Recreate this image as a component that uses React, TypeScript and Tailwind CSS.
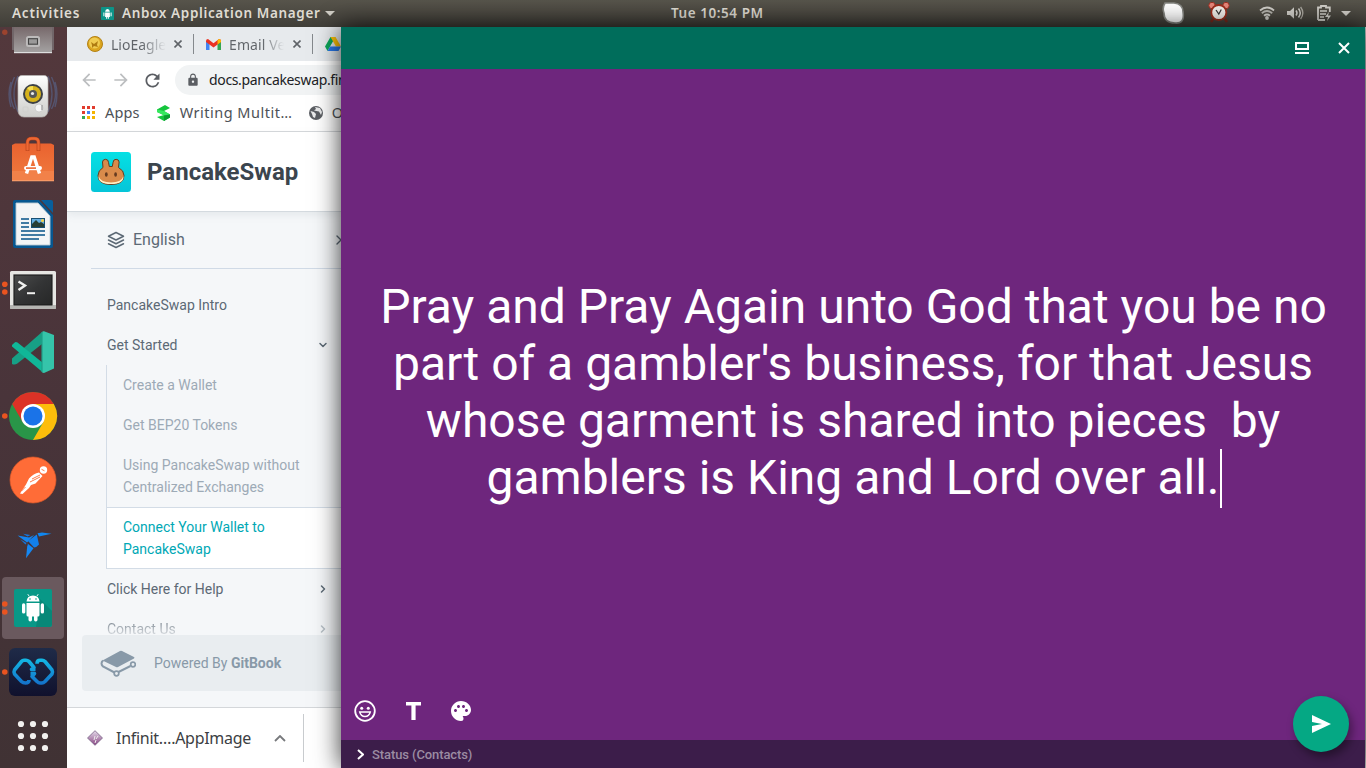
import React from 'react';
import { FiLayers, FiChevronRight, FiChevronDown } from 'react-icons/fi';
import { MdLock, MdRefresh, MdPalette, MdArrowBack, MdArrowForward } from 'react-icons/md';

const UI = "font-['Noto_Sans','Open_Sans',sans-serif]";

function Slot({ children, dots = [] }: { children: React.ReactNode; dots?: number[] }) {
  return (
    <svg className="block h-16 w-[67px] shrink-0" viewBox="0 0 67 64">
      {children}
      {dots.map((y) => (
        <circle key={y} cx="4.8" cy={y} r="2.8" fill="#e95420" />
      ))}
    </svg>
  );
}

function Dock() {
  return (
    <nav className="flex w-[67px] shrink-0 flex-col bg-linear-to-b from-[#53383c] via-[#49343a] to-[#403234]">
      <svg className="block h-[37px] w-[67px] shrink-0" viewBox="0 27 67 37">
        <defs>
          <linearGradient id="drawer" x1="0" y1="0" x2="0" y2="1">
            <stop offset="0" stopColor="#77696b" />
            <stop offset="1" stopColor="#a5a3a3" />
          </linearGradient>
        </defs>
        <rect x="12" y="27" width="42" height="23" fill="#716669" />
        <rect x="14" y="27" width="38" height="26" fill="url(#drawer)" />
        <rect x="14" y="52" width="38" height="1.2" fill="#dedede" />
        <rect x="26" y="36" width="14" height="11" rx="2.5" fill="#bdbbbb" />
        <rect x="28.5" y="38.7" width="9" height="5.5" fill="#9a9999" stroke="#444" strokeWidth="1.1" />
        <circle cx="4.8" cy="32.3" r="2.7" fill="#9c432e" />
      </svg>
      <Slot>
        <defs>
          <linearGradient id="spk" x1="0" y1="0" x2="0" y2="1">
            <stop offset="0" stopColor="#fff" />
            <stop offset="0.5" stopColor="#e4e4e2" />
            <stop offset="1" stopColor="#cfcfcc" />
          </linearGradient>
        </defs>
        <g fill="none" stroke="#5a6f9f" strokeWidth="1.4" opacity="0.5">
          <path d="M18 12q-8 18 0 36M14.500 13q-8 17 0 32M11 18q-4 12 0 25M48 12q8 18 0 36M51.500 13q8 17 0 32M55 18q4 12 0 25" />
        </g>
        <path d="M22 11.500h22q4 0 4 5v29q-.3 7.500-6 7.500H24q-6 0-6-7.500v-29q0-5 4-5z" fill="url(#spk)" stroke="#b9b7b4" strokeWidth=".7" />
        <circle cx="33" cy="30" r="10" fill="#3d4145" />
        <circle cx="33" cy="30" r="8" fill="#d6b21c" />
        <path d="M33 30l-6-6a8 8 0 0 1 6-2z" fill="#f4dc50" />
        <circle cx="33" cy="30" r="4" fill="#555659" />
        <circle cx="32.500" cy="29.500" r="1.6" fill="#ececec" />
        <circle cx="39" cy="44" r="4" fill="#f5f5f5" stroke="#c3c3c1" strokeWidth=".7" />
        <path d="M42 41v5" stroke="#a3a3a3" strokeWidth="1.4" />
        <rect x="23" y="43" width="5" height="5" rx="1" fill="none" stroke="#d0d0cd" />
      </Slot>
      <Slot>
        <defs>
          <linearGradient id="bag" x1="0" y1="0" x2="0" y2="1">
            <stop offset="0" stopColor="#e9622f" />
            <stop offset="1" stopColor="#f17b3f" />
          </linearGradient>
        </defs>
        <path d="M12 17l3-1.500h36l3 1.500v36H12z" fill="url(#bag)" />
        <path d="M12 43h42v10H12z" fill="#f28149" />
        <path d="M12 52.300h42v.9H12z" fill="#f9a26f" />
        <path d="M27.500 23v-8q0-4.500 4-4.500h3q4 0 4 4.500v8" fill="none" stroke="#b5401a" strokeWidth="3.6" />
        <path d="M27.500 22.500v-8q0-4 4-4h3q4 0 4 4v8" fill="none" stroke="#ec6733" strokeWidth="2.4" />
        <path d="M26.500 45.500l5.300-16.500h2.400l5.300 16.500" fill="none" stroke="#fff" strokeWidth="3.4" />
        <rect x="24" y="38" width="18" height="4.200" rx="2.1" fill="#fff" />
        <path d="M26 40.100h10" stroke="#ec6733" strokeWidth="1.6" />
      </Slot>
      <Slot>
        <path d="M15 8h24l14 15v31q0 2-2 2H15q-2 0-2-2V10q0-2 2-2z" fill="#075790" />
        <path d="M16 11h22l12 13v29H16z" fill="#f3f5f6" stroke="#bac9d3" strokeWidth=".9" />
        <path d="M41 8h10q2 0 2 2v11z" fill="#085f9c" />
        <path d="M21 27h8M21 31h8M21 35h8M21 39h24M21 43h24M21 47h18" stroke="#075388" strokeWidth="1.7" />
        <rect x="31.500" y="26.500" width="13" height="9" fill="#65aee0" stroke="#174f74" />
        <path d="M32 35v-3l4-4 3 3 2-1 3 2v3z" fill="#283f35" />
        <circle cx="42.500" cy="28.500" r="1.500" fill="#f5cf45" />
      </Slot>
      <Slot dots={[28.2, 36]}>
        <defs>
          <linearGradient id="term" x1="0" y1="0" x2="1" y2="1">
            <stop offset="0" stopColor="#4b4c4c" />
            <stop offset=".5" stopColor="#333435" />
            <stop offset="1" stopColor="#262727" />
          </linearGradient>
        </defs>
        <rect x="10" y="15" width="46" height="38" rx="1.500" fill="#e6e6e3" />
        <path d="M10 49h46v3q0 1-1.500 1h-43q-1.500 0-1.500-1z" fill="#b5b5b2" />
        <rect x="13" y="18" width="40" height="31.500" fill="#cbcbc9" />
        <rect x="14" y="19" width="38" height="30" fill="url(#term)" stroke="#191919" />
        <path d="M18.500 25.500l6.500 4-6.500 4.500" fill="none" stroke="#f0f0ef" strokeWidth="2.4" />
        <path d="M27 37.200h8" stroke="#f0f0ef" strokeWidth="2" />
      </Slot>
      <Slot>
        <path d="M12 44v-5.500L42 12v12L17 43.800q-2.500 1.500-5 .2z" fill="#17a086" />
        <path d="M12 25l3-2.800q1.200-.6 2.500.4L43 43v9.500L12 26.500z" fill="#10b798" />
        <path d="M42 12.300q.5-1.300 2-1L54 15v33.500L44 53q-1.500 0-2-1z" fill="#35c4aa" />
        <path d="M42 12v40" stroke="#1f9e88" strokeWidth="1.2" />
      </Slot>
      <Slot dots={[32]}>
        <circle cx="33" cy="32" r="24" fill="#299548" />
        <path d="M12.200 20A24 24 0 0 1 53.800 20H33L22.600 38z" fill="#dc3226" />
        <path d="M53.800 20A24 24 0 0 1 33 56l10.400-18L33 20z" fill="#fdbd0b" />
        <circle cx="33" cy="32" r="12" fill="#fff" />
        <circle cx="33" cy="32" r="9.500" fill="#1a73e8" />
      </Slot>
      <Slot>
        <circle cx="33" cy="32" r="23" fill="#ff6c37" stroke="#df5928" strokeWidth=".7" />
        <circle cx="43.500" cy="22" r="3.700" fill="#fff" />
        <path d="M39 24.500l3.500 3.500-7 7.500-4.500 1.500-2 3-6.500 6-2.500-.5 6-9 3-6q4.500-5 10-6z" fill="#fff" />
        <path d="M32 31l8-4M30 34l10-5M21.500 43l4-4M41.500 21.300l3 1.500" stroke="#ff6c37" strokeWidth=".9" />
      </Slot>
      <Slot>
        <path d="M37.500 21.200l4.500-.7 9.500 1.300-12.500 2.600z" fill="#1187ef" />
        <path d="M36.800 22.500l2.200 10q-2.500 3-5 3l-6-6.500z" fill="#1280ec" />
        <path d="M17.600 23.500l11.500 2 5-2.500-7 7.500z" fill="#1486f2" />
        <path d="M23 21.700l7.500 1.200-3 1.500zM20.500 27.500l6 3.500-1 1.500z" fill="#1477df" />
        <path d="M27.500 31.500l6 4.800-7.500 10z" fill="#1588f3" />
        <path d="M28.500 30.500l-3 6" stroke="#453337" strokeWidth=".6" />
      </Slot>
      <Slot dots={[28, 36]}>
        <rect x="2" y="1" width="62" height="62" rx="4" fill="#6a595e" />
        <rect x="14" y="13" width="38" height="38" rx="2" fill="#089887" />
        <path d="M40 23l12 12v14l-2 2H36z" fill="#078878" />
        <g fill="#fff">
          <path d="M26.500 25.500q.5-5.800 6.500-6 6 .2 6.500 6z" />
          <path d="M26.500 27h13v12q0 1.500-1.500 1.500H28q-1.500 0-1.500-1.500z" />
          <rect x="22" y="27.300" width="3.300" height="10.200" rx="1.600" />
          <rect x="40.700" y="27.300" width="3.300" height="10.200" rx="1.600" />
          <rect x="28.500" y="36" width="3.500" height="9.500" rx="1.700" />
          <rect x="34" y="36" width="3.500" height="9.500" rx="1.700" />
        </g>
        <path d="M29 20l-1.200-1.800M37 20l1.200-1.800" stroke="#fff" strokeWidth=".9" />
        <circle cx="30" cy="23" r=".8" fill="#089887" />
        <circle cx="36" cy="23" r=".8" fill="#089887" />
      </Slot>
      <Slot dots={[32]}>
        <defs>
          <linearGradient id="infBg" x1="0" y1="0" x2="0" y2="1">
            <stop offset="0" stopColor="#1f2b48" />
            <stop offset="1" stopColor="#10112d" />
          </linearGradient>
          <linearGradient id="infFg" gradientUnits="userSpaceOnUse" x1="0" y1="19" x2="0" y2="45">
            <stop offset="0" stopColor="#13b8e4" />
            <stop offset="1" stopColor="#146fc9" />
          </linearGradient>
        </defs>
        <rect x="9" y="8" width="48" height="48" rx="6" fill="url(#infBg)" />
        <g fill="none" stroke="url(#infFg)" strokeWidth="3.600" strokeLinejoin="round">
          <path d="M35.500 29.500h-4L34 27.500l-5-6q-1.500-1.200-3-1.200h-2q-1.500 0-2.500 1.200L14.500 30q-1 2 0 4l7 7.500q1.500 1.500 4 1.500 3.500 0 3.500-3" />
          <path d="M30.500 33.500h4L32 36.500l5 5q1.500 1.500 3 1.500h2q1.500 0 3-1.500l7-7.500q1-2 0-4l-7-8.500q-1.200-1.200-3-1.200h-2q-3 0-3 3.500" />
        </g>
      </Slot>
      <Slot>
        {[20, 32, 44].map((y) => [21, 33, 45].map((x) => <circle key={`${x}-${y}`} cx={x} cy={y} r="3.100" fill="#f2f1ef" />))}
      </Slot>
    </nav>
  );
}

function TopBar() {
  return (
    <header className={`flex h-[27px] shrink-0 items-center bg-linear-to-b from-[#57544b] to-[#403e38] text-[13.500px] font-semibold text-[#dfdbd2] ${UI}`}>
      <span className="ml-3 w-[89px] whitespace-nowrap tracking-[0.8px]">Activities</span>
      <svg className="h-[13px] w-[13px] shrink-0" viewBox="0 0 38 38">
        <rect width="38" height="38" rx="2" fill="#0d9488" />
        <path d="M12 14q1-8 7-8t7 8zM12 16h14v13h-3v5h-3v-5h-2v5h-3v-5h-3zM7 16h3v11H7zM28 16h3v11h-3z" fill="#fff" />
      </svg>
      <span className="ml-2 w-[200px] whitespace-nowrap tracking-[0.64px]">Anbox Application Manager</span>
      <svg className="ml-[3px] h-[5px] w-[10px] shrink-0" viewBox="0 0 10 5"><path d="M0 0h10L5 5z" fill="#d0cdc5" /></svg>
      <span className="ml-[336px] w-[93px] whitespace-nowrap tracking-[0.55px]">Tue 10:54 PM</span>
      <svg className="ml-[398px] h-[27px] w-[204px] shrink-0" viewBox="1162 0 204 27">
        <path d="M1165 3h9q9 1 9 9 2 12-8 11-11 0-11-10-2-5 1-10z" fill="#fff" stroke="#858681" strokeWidth="1.600" />
        <path d="M1213 19l-2 3M1225 19l2 3" stroke="#7b271a" strokeWidth="2.500" />
        <circle cx="1212" cy="5.500" r="3.200" fill="#e8877a" stroke="#9e3023" />
        <circle cx="1226" cy="5.500" r="3.200" fill="#e8877a" stroke="#9e3023" />
        <circle cx="1218.800" cy="12.500" r="7.500" fill="#f3f0eb" stroke="#9c2d1c" strokeWidth="1.800" />
        <path d="M1216 10l2.800 4 2.500-4.500" fill="none" stroke="#333" strokeWidth="1.200" />
        <g fill="none" stroke="#d0cec8" strokeWidth="1.800">
          <path d="M1260 10.500q7-6 14 0" /><path d="M1261.800 13.200q5.200-4.300 10.400 0" opacity=".8" /><path d="M1264 15.800q3-2.500 6 0" />
        </g>
        <circle cx="1267" cy="18" r="1.900" fill="#d0cec8" />
        <path d="M1287 11h3l4-3.700v11.500l-4-3.800h-3z" fill="#d0cec8" />
        <path d="M1296 10.500q2 2.500 0 5M1298.500 8.500q3.500 4.500 0 9" fill="none" stroke="#d0cec8" strokeWidth="1.500" />
        <path d="M1300.600 7q4.500 6 0 12" fill="none" stroke="#aaa79f" strokeWidth="1.300" />
        <path d="M1318 20V7.500h3V6h5v1.500h3.800V12M1325 20h-7" fill="none" stroke="#d0cec8" strokeWidth="1.800" />
        <path d="M1320 11h7M1320 14h6M1320 17h4" stroke="#d0cec8" strokeWidth="1.500" />
        <path d="M1329 12l-4 5h3l-1 4 4-5.500h-3z" fill="#d0cec8" />
        <path d="M1341 11h10l-5 5z" fill="#d0cec8" />
      </svg>
    </header>
  );
}

function CloseX() {
  return <svg className="h-2 w-2 shrink-0" viewBox="0 0 8 8"><path d="M.5.5l7 7M7.500.5l-7 7" stroke="#5f6368" strokeWidth="1.600" /></svg>;
}

function BrowserChrome() {
  return (
    <div className={`shrink-0 text-[#5f6368] ${UI}`}>
      <div className="flex h-[34px] items-center bg-[#e7eaed] text-[14px]">
        <svg className="ml-5 h-4 w-4 shrink-0" viewBox="0 0 16 16">
          <circle cx="8" cy="8" r="7.500" fill="#dba51f" stroke="#b38216" />
          <circle cx="7.500" cy="7" r="5.500" fill="#f0cc51" />
          <path d="M4 6l3 2 4-3-1 4 1 2-4-1-2 2 0-3z" fill="#af7c12" />
        </svg>
        <span className="ml-2 w-[56px] overflow-hidden whitespace-nowrap bg-linear-to-r from-[#5f6368] from-55% to-transparent bg-clip-text text-transparent">LioEagle</span>
        <span className="ml-2 flex"><CloseX /></span>
        <span className="ml-[11px] h-5 w-px bg-[#85898d]" />
        <svg className="ml-3 h-[11px] w-[15px] shrink-0" viewBox="0 0 15 11">
          <path d="M0 2v9h3.500V4.500z" fill="#4285f4" /><path d="M15 2v9h-3.500V4.500z" fill="#34a853" />
          <path d="M0 2q0-2 2-2l5.500 4.300L13 0q2 0 2 2v1L7.500 8.500 0 3z" fill="#ea3323" />
          <path d="M11.500 1.200L13 0q2 0 2 2v1l-3.500 2.500z" fill="#fbbc04" />
        </svg>
        <span className="ml-2 w-[56px] overflow-hidden whitespace-nowrap bg-linear-to-r from-[#5f6368] from-60% to-transparent bg-clip-text tracking-[0.100px] text-transparent">Email Ver</span>
        <span className="ml-[9px] flex"><CloseX /></span>
        <span className="ml-[11px] h-5 w-px bg-[#85898d]" />
        <svg className="ml-3 h-[14px] w-4 shrink-0" viewBox="0 0 16 14">
          <path d="M5.500 0h5L5.300 9 2.500 14 0 9.500z" fill="#0ca75a" /><path d="M5.500 0h5L16 9.500h-5z" fill="#ffc107" /><path d="M5 9.500h11L13.500 14h-11z" fill="#2979ed" />
        </svg>
      </div>
      <div className="flex h-[38px] items-center bg-white">
        <MdArrowBack className="ml-3 h-5 w-5 shrink-0 text-[#bcbec0]" />
        <MdArrowForward className="ml-3 h-5 w-5 shrink-0 text-[#bcbec0]" />
        <MdRefresh className="ml-[11px] h-[21px] w-[21px] shrink-0 text-[#5b5e63]" />
        <div className="ml-3 flex h-[30px] w-[200px] shrink-0 items-center rounded-l-full bg-[#f1f3f4] pl-[11px]">
          <MdLock className="h-[14px] w-[14px] shrink-0 text-[#5b5e63]" />
          <span className="-mt-0.5 ml-[9px] whitespace-nowrap text-[14px] tracking-[-0.350px] text-[#202124]">docs.pancakeswap.finance</span>
        </div>
      </div>
      <div className="flex h-[33px] items-center border-b border-[#d7d9dc] bg-white pb-[5px] text-[14.500px] text-[#4d5156]">
        <svg className="ml-[15px] h-[13px] w-[13px] shrink-0" viewBox="0 0 13 13">
          <path d="M0 0h3v3H0zM5 0h3v3H5zM10 0h3v3h-3zM0 5h3v3H0z" fill="#e13c2e" /><path d="M10 5h3v3h-3zM5 10h3v3H5zM10 10h3v3h-3z" fill="#f4b400" /><path d="M5 5h3v3H5z" fill="#4285f4" /><path d="M0 10h3v3H0z" fill="#34a853" />
        </svg>
        <span className="ml-[10px] w-[35px] whitespace-nowrap tracking-[0.150px]">Apps</span>
        <svg className="ml-[17px] h-4 w-[14px] shrink-0" viewBox="0 0 14 16">
          <path d="M0 4.500L8 0l5 3-6 3 6 3.500v3L7 16 0 12l7-2-7-3z" fill="#14c53c" /><path d="M0 4.500L7 6l6 3.500-6 1L0 7z" fill="#35e85d" /><path d="M7 10.500l6-1v3L7 16z" fill="#0b9e2f" />
        </svg>
        <span className="ml-[9px] w-[112px] whitespace-nowrap tracking-[0.500px]">Writing Multit…</span>
        <svg className="ml-4 h-4 w-4 shrink-0" viewBox="0 0 16 16">
          <circle cx="8" cy="8" r="7" fill="#5b5e63" /><path d="M2.500 6l3.500 1 2 2-1 4-2-1-1-3zM7 2l1 2-2 1.500 5 1L13 10l1-3-2-4z" fill="#e9eaeb" />
        </svg>
        <span className="ml-2 whitespace-nowrap">Other</span>
      </div>
    </div>
  );
}

function Docs() {
  return (
    <div className="flex min-h-0 flex-1 flex-col bg-[#f5f7f9] font-['Roboto',sans-serif] text-sm text-[#5c6975]">
      <div className="z-10 flex h-[80px] shrink-0 items-center border-b border-[#d4dadf] bg-white pl-6 shadow-[0_3px_8px_rgba(116,129,141,0.12)]">
        <svg className="h-10 w-10 shrink-0" viewBox="0 0 40 40">
          <defs><linearGradient id="cake" x1="0" y1="0" x2="0" y2="1"><stop stopColor="#05e0e4" /><stop offset="1" stopColor="#05c5d8" /></linearGradient></defs>
          <rect width="40" height="40" rx="3.500" fill="url(#cake)" />
          <path d="M12 15.500L11.500 10q.3-2.700 3-2.700 2.800 0 3 3l.8 4.200h3l.8-4.200q.2-3 3-3 2.700 0 3 2.700L27.500 15.500q5.500 3 5.500 8 0 9-13 9t-13-9q0-5 5-8z" fill="#d98b4b" stroke="#653b20" />
          <path d="M7.500 24q2 6.500 12.500 6.500T32.500 24q.5 8-12.500 8T7.500 24z" fill="#fff0c5" />
          <ellipse cx="15.300" cy="22.500" rx="1.400" ry="2.300" fill="#653b20" /><ellipse cx="24.600" cy="22.500" rx="1.400" ry="2.300" fill="#653b20" />
        </svg>
        <span className="ml-4 text-2xl font-bold text-[#3b454e]">PancakeSwap</span>
      </div>
      <div className="ml-6 mr-[-20px] flex h-[57px] shrink-0 items-center border-b border-[#d0dae6] pl-4 text-base">
        <FiLayers className="h-[18px] w-[18px] text-[#5c6975]" />
        <span className="ml-2">English</span>
        <FiChevronRight className="ml-[146px] h-4 w-4" />
      </div>
      <div className="flex h-[366px] shrink-0 flex-col overflow-hidden pl-10 pt-4">
        <div className="flex h-10 shrink-0 items-center">PancakeSwap Intro</div>
        <div className="flex h-10 shrink-0 items-center justify-between pr-3"><span>Get Started</span><FiChevronDown className="h-3 w-3" strokeWidth={3} /></div>
        <div className="-ml-px shrink-0 border-l border-[#d3dce6] text-[#9daab6]">
          <div className="flex h-10 items-center pl-4">Create a Wallet</div>
          <div className="flex h-10 items-center pl-4">Get BEP20 Tokens</div>
          <div className="h-[62px] pl-4 pt-[9px] leading-[22px]">Using PancakeSwap without<br />Centralized Exchanges</div>
          <div className="-ml-px h-[62px] border border-r-0 border-[#d3dce6] bg-white pl-4 pt-2 leading-[22px] text-[#00a8b5]">Connect Your Wallet to<br />PancakeSwap</div>
        </div>
        <div className="flex h-10 shrink-0 items-center justify-between pr-3"><span>Click Here for Help</span><FiChevronRight className="h-3 w-3" strokeWidth={3} /></div>
        <div className="flex h-10 shrink-0 items-center justify-between bg-linear-to-b from-[#7d8791] from-30% to-[#f5f7f9] to-75% bg-clip-text pr-3 text-transparent"><span>Contact Us</span><FiChevronRight className="h-3 w-3 text-[#b6bec5]" strokeWidth={3} /></div>
      </div>
      <div className="ml-[15px] flex h-14 shrink-0 items-center rounded-l bg-[#e9edf0] pl-[18px] text-[#8899a8]">
        <svg className="h-[27px] w-9 shrink-0" viewBox="0 0 36 27">
          <path d="M2.500 10.500L20 1q1-.5 2 0l12 6q1 .8 0 1.500L18 17q-1 .5-2 0z" fill="#8899a8" />
          <path d="M3 10.500q-3 3 0 6l11.500 6M18.500 22l12-6" fill="none" stroke="#8899a8" strokeWidth="2" />
          <circle cx="16.500" cy="23.500" r="2.300" fill="none" stroke="#8899a8" strokeWidth="1.700" /><circle cx="33" cy="14.500" r="2.300" fill="none" stroke="#8899a8" strokeWidth="1.700" />
        </svg>
        <span className="ml-[18px] whitespace-nowrap">Powered By <b>GitBook</b></span>
      </div>
    </div>
  );
}

function Downloads() {
  return (
    <div className={`flex h-[61px] shrink-0 items-center border-t border-[#d4d7da] bg-white text-[#3c4043] ${UI}`}>
      <svg className="ml-5 h-4 w-4 shrink-0" viewBox="0 0 16 16">
        <defs><linearGradient id="gem" x1="0" y1="0" x2="0" y2="1"><stop stopColor="#e6dfed" /><stop offset="1" stopColor="#86407f" /></linearGradient></defs>
        <path d="M8 .7L15.500 8 8 15.300.5 8z" fill="url(#gem)" stroke="#765f83" strokeWidth=".8" /><path d="M7 10l1-4M9 9l2-3M8 13l1-3" stroke="#eee" />
      </svg>
      <span className="ml-[13px] w-[136px] whitespace-nowrap text-[16px] tracking-[-0.280px]">Infinit….AppImage</span>
      <svg className="ml-[22px] h-[7px] w-3 shrink-0" viewBox="0 0 12 7"><path d="M1 6l5-5 5 5" fill="none" stroke="#77797c" strokeWidth="1.800" /></svg>
      <span className="ml-[17px] h-12 w-px bg-[#c8cbce]" />
    </div>
  );
}

function StatusWindow() {
  return (
    <section className="z-20 flex w-[1024px] shrink-0 flex-col bg-[#6e267d] font-['Roboto',sans-serif] text-white shadow-[0_0_24px_rgba(0,0,0,0.8)]">
      <div className="flex h-[42px] shrink-0 items-center justify-end bg-[#006d5b] pr-[15px]">
        <svg className="h-3 w-[14px]" viewBox="0 0 14 12"><path d="M1 1h12v6H1zM0 11h14" fill="none" stroke="#fff" strokeWidth="2" /></svg>
        <svg className="ml-[29px] h-3 w-3" viewBox="0 0 12 12"><path d="M1 1l10 10M11 1L1 11" stroke="#fff" strokeWidth="2" /></svg>
      </div>
      <div className="flex h-[642px] shrink-0 flex-col items-center pt-[209px] text-[48px] leading-[57px]">
        <div className="whitespace-pre pl-px">Pray and Pray Again unto God that you be no</div>
        <div className="whitespace-pre">part of a gambler's business, for that Jesus</div>
        <div className="whitespace-pre">whose garment is shared into pieces  by</div>
        <div className="flex whitespace-pre">gamblers is King and Lord over all.<span className="-mr-0.5 h-[59px] w-0.5 bg-white" /></div>
      </div>
      <div className="flex h-[29px] shrink-0 items-start">
        <svg className="-mt-[11px] ml-[13px] h-[22px] w-[22px]" viewBox="0 0 22 22">
          <circle cx="11" cy="11" r="9.800" fill="none" stroke="#fff" strokeWidth="1.800" />
          <circle cx="7.700" cy="8.300" r="1.500" fill="#fff" /><circle cx="14.300" cy="8.300" r="1.500" fill="#fff" />
          <path d="M5.700 12h10.600q-1.200 4.500-5.300 4.500T5.700 12z" fill="none" stroke="#fff" strokeWidth="1.400" />
        </svg>
        <svg className="-mt-[9px] ml-[30px] h-[18px] w-[15px]" viewBox="0 0 15 18"><path d="M0 0h15v3.500H9.600V18H5.400V3.500H0z" fill="#fff" /></svg>
        <MdPalette className="-mt-[12px] ml-[28px] h-6 w-6" />
      </div>
      <div className="flex h-7 shrink-0 items-center bg-[#3c1d4a] pl-4">
        <svg className="h-[11px] w-[7px]" viewBox="0 0 7 11"><path d="M1 1l5 4.500-5 4.500" fill="none" stroke="#fff" strokeWidth="2" /></svg>
        <span className="ml-2 pt-0.5 text-[13px] font-medium tracking-[-0.100px] text-[#9b8ca2]">Status (Contacts)</span>
      </div>
    </section>
  );
}

export default function App() {
  return (
    <div className="relative flex h-[768px] w-[1366px] flex-col overflow-hidden">
      <TopBar />
      <div className="flex min-h-0 flex-1">
        <Dock />
        <main className="flex w-[274px] shrink-0 flex-col overflow-hidden">
          <BrowserChrome />
          <Docs />
          <Downloads />
        </main>
        <StatusWindow />
        <div className="flex-1 bg-[#c9cdcb]" />
      </div>
      <button className="absolute right-[17px] bottom-4 z-30 flex h-14 w-14 items-center justify-center rounded-full bg-[#05a884] shadow-[3px_5px_10px_rgba(0,0,0,0.4)]">
        <svg className="h-[18px] w-[19px]" viewBox="0 0 19 18"><path d="M0 0l19 9L0 18v-7l10-2-10-2z" fill="#fff" /></svg>
      </button>
    </div>
  );
}
